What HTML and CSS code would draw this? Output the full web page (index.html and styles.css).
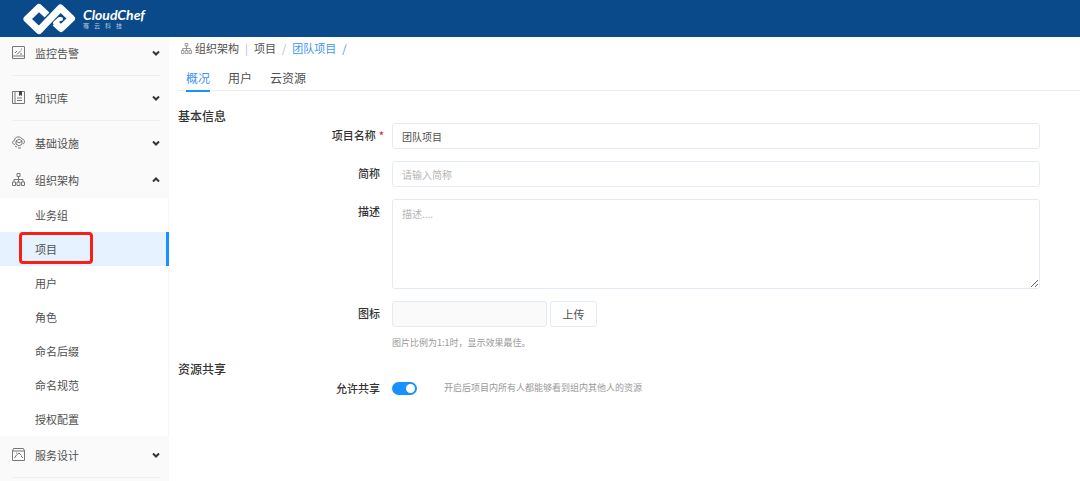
FILE: index.html
```html
<!DOCTYPE html>
<html lang="zh-CN">
<head>
  <meta charset="UTF-8">
  <title>团队项目 - CloudChef</title>
  <meta name="viewport" content="width=device-width, initial-scale=1.0">
  <link rel="stylesheet" href="styles.css">
</head>
<body>
  <header class="topbar">
    <svg class="logo" viewBox="0 0 54 32" width="54" height="32">
      <path d="M24 12L16 4.500L4 16L16 27.500L37.500 5L48.500 15.500L38 25.500L32 20"/>
      <path class="hook" d="M32 20L36.500 16L38 16"/>
    </svg>
    <div class="brand">
      <span class="brand-name">CloudChef</span>
      <span class="brand-sub">骞云科技</span>
    </div>
  </header>

  <div class="layout">
    <!-- 左侧菜单 -->
    <nav class="sidebar">
      <div class="menu">
        <button type="button" class="menu-item">
          <svg class="icon" viewBox="0 0 13 13"><path d="M.5.5h12v12H.5zM1 10h11M3 7l2-2M5 8.500l4-4M8 8h2M9 3h1"/></svg>
          <span>监控告警</span>
          <svg class="arrow" viewBox="0 0 8 6"><path d="M1 1.500l3 3 3-3"/></svg>
        </button>
        <hr class="line">
        <button type="button" class="menu-item">
          <svg class="icon" viewBox="0 0 13 13"><path d="M.5.5h12v12H.5zM3 .5v12M5 7h5M5 9.500h5"/><path class="fill" d="M7 0h3v5L8.500 4 7 5z"/></svg>
          <span>知识库</span>
          <svg class="arrow" viewBox="0 0 8 6"><path d="M1 1.500l3 3 3-3"/></svg>
        </button>
        <hr class="line">
        <button type="button" class="menu-item">
          <svg class="icon" viewBox="0 0 13 13"><path d="M3 8.500C0 8.500 0 4.500 2.500 4.500 2.500 0 9 0 10 3c3 0 3 4.500 1 5M4 5l3-2 3 2-3 2zM4 5v3l3 2 3-2V5M3 10l2 1M6 12h3"/></svg>
          <span>基础设施</span>
          <svg class="arrow" viewBox="0 0 8 6"><path d="M1 1.500l3 3 3-3"/></svg>
        </button>
        <button type="button" class="menu-item">
          <svg class="icon" viewBox="0 0 13 13"><path d="M5 .5h3v3H5zM.5 9h3v3.500h-3zM5 9h3v3.500H5zM9.500 9h3v3.500h-3zM6.500 3.500V9M2 9V6.500h9V9"/></svg>
          <span>组织架构</span>
          <svg class="arrow" viewBox="0 0 8 6"><path d="M1 4.500l3-3 3 3"/></svg>
        </button>
        <div class="submenu">
          <a href="#" class="submenu-item">业务组</a>
          <a href="#" class="submenu-item active">项目<i class="mark"></i></a>
          <a href="#" class="submenu-item">用户</a>
          <a href="#" class="submenu-item">角色</a>
          <a href="#" class="submenu-item">命名后缀</a>
          <a href="#" class="submenu-item">命名规范</a>
          <a href="#" class="submenu-item">授权配置</a>
        </div>
        <button type="button" class="menu-item">
          <svg class="icon" viewBox="0 0 13 13"><path d="M1.500.5h10l1 2.500v9.500H.5V3zM.5 3h12M2.500 10l2-3M4.500 7L7 5l2.500 2.500M9 8l2 2M4 5h1"/></svg>
          <span>服务设计</span>
          <svg class="arrow" viewBox="0 0 8 6"><path d="M1 1.500l3 3 3-3"/></svg>
        </button>
        <hr class="line">
      </div>
    </nav>

    <main class="content">
      <!-- 面包屑 -->
      <div class="breadcrumb">
        <svg class="crumb-icon" viewBox="0 0 13 13"><path d="M5 .5h3v3H5zM.5 9h3v3.500h-3zM5 9h3v3.500H5zM9.500 9h3v3.500h-3zM6.500 3.500V9M2 9V6.500h9V9"/></svg>
        <a href="#">组织架构</a>
        <span class="sep">|</span>
        <a href="#">项目</a>
        <span class="sep">/</span>
        <a href="#" class="current">团队项目</a>
        <span class="sep current">/</span>
      </div>

      <div class="tabs">
        <a href="#" class="tab active">概况</a>
        <a href="#" class="tab">用户</a>
        <a href="#" class="tab">云资源</a>
      </div>

      <form class="form">
        <h2 class="section-title">基本信息</h2>
        <div class="row">
          <label class="label" for="name">项目名称<span class="required">*</span></label>
          <input class="input" type="text" id="name" value="团队项目">
        </div>
        <div class="row">
          <label class="label" for="alias">简称</label>
          <input class="input" type="text" id="alias" placeholder="请输入简称">
        </div>
        <div class="row">
          <label class="label" for="desc">描述</label>
          <textarea class="input textarea" id="desc" placeholder="描述...."></textarea>
        </div>
        <div class="row">
          <label class="label" for="icon">图标</label>
          <input class="input file-name" type="text" id="icon" disabled>
          <button type="button" class="upload">上传</button>
        </div>
        <p class="help">图片比例为1:1时，显示效果最佳。</p>

        <h2 class="section-title">资源共享</h2>
        <div class="row switch-row">
          <label class="label" for="share">允许共享</label>
          <input class="switch" type="checkbox" id="share" checked>
          <span class="tip">开启后项目内所有人都能够看到组内其他人的资源</span>
        </div>
      </form>
    </main>
  </div>
</body>
</html>
```

FILE: styles.css
```css
* {
  box-sizing: border-box;
  margin: 0;
  padding: 0;
}

body {
  display: flex;
  flex-direction: column;
  height: 100vh;
  overflow: hidden;
  font-family: "Noto Sans CJK SC", "Noto Sans", sans-serif;
  font-size: 11px;
  line-height: 16px;
  color: #505050;
  background: #fff;
}

a {
  color: inherit;
  text-decoration: none;
}

button,
input,
textarea {
  font-family: inherit;
  color: inherit;
}

/* 顶部栏 */
.topbar {
  display: flex;
  flex: none;
  align-items: center;
  gap: 6px;
  height: 37px;
  padding-left: 23px;
  background: #0a4a8a;
  color: #fff;
}

.logo {
  fill: none;
  stroke: #fff;
  stroke-width: 7;
  stroke-linejoin: round;
}

.logo .hook {
  stroke-width: 4;
  stroke-linecap: round;
}

.brand {
  display: flex;
  flex-direction: column;
}

.brand-name {
  font-family: Lato, sans-serif;
  font-size: 14px;
  font-style: italic;
  font-weight: bold;
  line-height: 14px;
}

.brand-sub {
  font-size: 6px;
  line-height: 8px;
  letter-spacing: 5px;
  color: #b9cde2;
}

.layout {
  display: flex;
  flex: 1;
  min-height: 0;
}

/* 左侧菜单 */
.sidebar {
  flex: none;
  width: 169px;
  overflow: hidden;
  background: #fafafa;
}

/* 菜单略微向上滚动 */
.menu {
  margin-top: -3px;
}

.menu-item {
  display: flex;
  align-items: center;
  width: 100%;
  height: 37px;
  padding: 0 9px 0 12px;
  border: none;
  background: none;
  font-size: 11px;
  text-align: left;
  cursor: pointer;
}

.icon,
.crumb-icon {
  width: 13px;
  height: 13px;
  margin-right: 10px;
  fill: none;
  stroke: #777;
}

.icon .fill {
  fill: #444;
  stroke: none;
}

.arrow {
  width: 8px;
  height: 6px;
  margin-left: auto;
  fill: none;
  stroke: #333;
  stroke-width: 2;
}

.line {
  margin: 4px 9px 3px 12px;
  border: none;
  border-top: 1px solid #eee;
}

.submenu {
  background: #fff;
  border-right: 1px solid #f5f5f5;
}

.submenu-item {
  display: block;
  position: relative;
  height: 34px;
  padding-left: 35px;
  line-height: 34px;
}

.submenu-item.active {
  margin-right: -1px;
  background: #e6f2ff;
  border-right: 3px solid #1890ff;
}

.mark {
  position: absolute;
  top: 0;
  left: 19px;
  width: 74px;
  height: 32px;
  border: 3px solid #fb1e16;
  border-radius: 4px;
}

/* 右侧内容 */
.content {
  flex: 1;
  min-width: 0;
  padding: 3px 0 0 9px;
}

.breadcrumb {
  display: flex;
  align-items: center;
  height: 16px;
  padding-left: 3px;
}

.crumb-icon {
  width: 11px;
  height: 11px;
  margin-right: 3px;
  stroke: #888;
}

.sep {
  margin: 0 6px;
  color: #bbb;
}

.current {
  color: #3d94f2;
}

.tabs {
  display: flex;
  gap: 18px;
  height: 35px;
  padding: 10px 8px 0;
  border-bottom: 1px solid #e8eef5;
  font-size: 12px;
}

.tab {
  height: 26px;
  line-height: 24px;
}

.tab.active {
  color: #3d94f2;
  border-bottom: 2px solid #1890ff;
}

.form {
  padding: 17px 40px 0 0;
}

.section-title {
  height: 15px;
  font-size: 12px;
  font-weight: 500;
  line-height: 15px;
  color: #333;
}

.row {
  display: flex;
  margin-bottom: 12px;
}

.label {
  flex: none;
  width: 202px;
  margin-right: 12px;
  font-weight: 500;
  line-height: 24px;
  text-align: right;
  color: #333;
}

/* 星号超出标签右边缘 */
.required {
  margin: 0 -4px 0 3px;
  color: #f5222d;
}

.input {
  flex: 1;
  min-width: 0;
  height: 26px;
  padding: 0 9px;
  border: 1px solid #e3ebf3;
  border-radius: 3px;
  outline: none;
  background: #fff;
  font-size: 10px;
}

.input::placeholder {
  color: #b5b5b5;
}

.textarea {
  height: 90px;
  padding-top: 6px;
  line-height: 16px;
  resize: vertical;
}

.file-name {
  flex: none;
  width: 155px;
  background: #fafafa;
}

.upload {
  width: 47px;
  height: 26px;
  margin-left: 3px;
  border: 1px solid #e3ebf3;
  border-radius: 3px;
  background: #fff;
  font-size: 11px;
  cursor: pointer;
}

.help {
  margin: -4px 0 10px 214px;
  font-size: 9px;
  color: #999;
}

.switch-row {
  align-items: center;
}

/* 开关 */
.switch {
  flex: none;
  width: 25px;
  height: 13px;
  padding: 2px;
  border-radius: 7px;
  background: #bbb;
  appearance: none;
  cursor: pointer;
}

.switch::before {
  content: "";
  display: block;
  width: 9px;
  height: 9px;
  border-radius: 50%;
  background: #fff;
}

.switch:checked {
  background: #1890ff;
}

.switch:checked::before {
  margin-left: auto;
}

.tip {
  margin-left: 27px;
  font-size: 9px;
  color: #999;
}
```
